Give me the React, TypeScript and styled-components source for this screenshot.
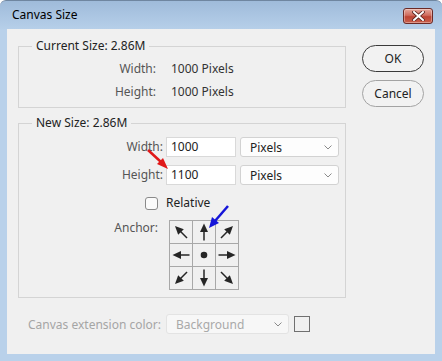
import styled, { createGlobalStyle } from "styled-components";

const GlobalStyle = createGlobalStyle`
  html, body {
    margin: 0;
    padding: 0;
    background: #ffffff;
  }
  body {
    font-family: "Noto Sans", "Open Sans", sans-serif;
  }
`;

const Window = styled.div`
  position: relative;
  width: 442px;
  height: 361px;
  box-sizing: border-box;
  border-top: 1px solid #6f86a0;
  border-radius: 6px 6px 0 0;
  background: linear-gradient(to bottom, #9fbbda 0px, #b6cfe9 28px, #b9d1ea 29px);
  display: flex;
  flex-direction: column;
  overflow: hidden;
`;

const TitleBar = styled.div`
  height: 28px;
  display: flex;
  align-items: center;
  justify-content: space-between;
  padding: 0 9px 0 12px;
`;

const Title = styled.span`
  font-size: 12px;
  color: #000;
  margin-top: -1px;
`;

const CloseButton = styled.div`
  width: 30px;
  height: 16px;
  margin-top: 2px;
  box-sizing: border-box;
  border: 1px solid #6b2a26;
  border-radius: 3px;
  background: linear-gradient(to bottom, #e6a89c 0%, #d06c5e 45%, #be4434 55%, #c9604c 100%);
  display: flex;
  align-items: center;
  justify-content: center;
  box-shadow: inset 0 0 0 1px rgba(255, 255, 255, 0.35);
`;

const Client = styled.div`
  flex: 1;
  margin: 0 7px 7px 7px;
  background: #f0f0f0;
  display: flex;
  padding: 9px 0 0 11px;
  gap: 16px;
  box-sizing: border-box;
`;

const MainColumn = styled.div`
  width: 328px;
  display: flex;
  flex-direction: column;
`;

const Group = styled.fieldset<{ $pad: string; $top?: number }>`
  margin: ${(p) => p.$top ?? 0}px 0 0 0;
  padding: ${(p) => p.$pad};
  border: 1px solid #d4d4d4;
  min-width: 0;
`;

const Legend = styled.legend`
  margin-left: 13px;
  padding: 0 4px;
  font-size: 12px;
  line-height: 16px;
  color: #222;
`;

const InfoGrid = styled.div`
  display: grid;
  grid-template-columns: 137px auto;
  column-gap: 15px;
  row-gap: 7px;
  font-size: 12px;
  line-height: 16px;
`;

const InfoLabel = styled.span`
  text-align: right;
  color: #555;
`;

const InfoValue = styled.span`
  color: #333;
`;

const FieldRow = styled.div<{ $top?: number }>`
  display: flex;
  align-items: center;
  margin-top: ${(p) => p.$top ?? 0}px;
`;

const FieldLabel = styled.span<{ $w: number }>`
  width: ${(p) => p.$w}px;
  text-align: right;
  font-size: 12px;
  line-height: 16px;
  color: #555;
  flex: none;
`;

const TextInput = styled.div`
  width: 70px;
  height: 20px;
  margin-left: 3px;
  box-sizing: border-box;
  border: 1px solid #d9d9d9;
  background: #fff;
  font-size: 12px;
  line-height: 18px;
  padding-left: 4px;
  color: #222;
`;

const Select = styled.div<{ $w: number; $disabled?: boolean }>`
  width: ${(p) => p.$w}px;
  height: 20px;
  box-sizing: border-box;
  border: 1px solid ${(p) => (p.$disabled ? "#e3e3e3" : "#d2d2d2")};
  border-radius: 3px;
  background: ${(p) => (p.$disabled ? "#f7f7f7" : "#fdfdfd")};
  display: flex;
  align-items: center;
  justify-content: space-between;
  padding: 0 6px 0 9px;
  font-size: 12px;
  color: ${(p) => (p.$disabled ? "#a9a9a9" : "#222")};
  margin-left: ${(p) => (p.$disabled ? 0 : 4)}px;
`;

const Checkbox = styled.div`
  width: 13px;
  height: 13px;
  box-sizing: border-box;
  border: 1px solid #8a8a8a;
  border-radius: 3px;
  background: #fbfbfb;
  margin-left: 126px;
  margin-right: 8px;
`;

const CheckLabel = styled.span`
  font-size: 12px;
  line-height: 16px;
  color: #222;
`;

const AnchorRow = styled.div`
  display: flex;
  margin-top: 9px;
  gap: 11px;
`;

const AnchorGrid = styled.div`
  display: grid;
  grid-template-columns: repeat(3, 22px);
  grid-template-rows: repeat(3, 22px);
  gap: 1px;
  padding: 1px;
  background: #a8a8a8;
  width: max-content;
`;

const AnchorCell = styled.div`
  background: #f0f0f0;
  display: flex;
  align-items: center;
  justify-content: center;
`;

const BottomRow = styled.div`
  display: flex;
  align-items: center;
  margin-top: 16px;
  padding-left: 10px;
`;

const DisabledLabel = styled.span`
  font-size: 12px;
  color: #a5a5a5;
  width: 138px;
  flex: none;
`;

const Swatch = styled.div`
  width: 16px;
  height: 16px;
  box-sizing: border-box;
  border: 1px solid #707070;
  margin-left: 5px;
`;

const ButtonColumn = styled.div`
  display: flex;
  flex-direction: column;
  gap: 8px;
  margin-top: 7px;
`;

const PillButton = styled.div<{ $primary?: boolean }>`
  width: 62px;
  height: 27px;
  box-sizing: border-box;
  border: 1px solid ${(p) => (p.$primary ? "#3a3a3a" : "#a3a3a3")};
  border-radius: 14px;
  background: #f2f2f2;
  display: flex;
  align-items: center;
  justify-content: center;
  font-size: 12px;
  color: #222;
`;

const Overlay = styled.svg`
  position: absolute;
  left: 0;
  top: 0;
  pointer-events: none;
`;

function Chevron() {
  return (
    <svg width="8" height="5" viewBox="0 0 8 5">
      <path d="M0.5 0.5 L4 4 L7.5 0.5" fill="none" stroke="#8a8a8a" strokeWidth="1" />
    </svg>
  );
}

function AnchorArrow({ angle }: { angle: number }) {
  return (
    <svg width="22" height="22" viewBox="0 0 22 22" style={{ transform: `rotate(${angle}deg)` }}>
      <polygon points="11,2.5 7,11 15,11" fill="#262626" />
      <line x1="11" y1="9" x2="11" y2="19.5" stroke="#262626" strokeWidth="1.5" />
    </svg>
  );
}

const anchors = [-45, 0, 45, -90, null, 90, -135, 180, 135];

export default function App() {
  return (
    <>
      <GlobalStyle />
      <Window>
        <TitleBar>
          <Title>Canvas Size</Title>
          <CloseButton>
            <svg width="13" height="10" viewBox="0 0 13 10">
              <path d="M2 1 L11 9 M11 1 L2 9" stroke="#5a2420" strokeWidth="3.6" strokeLinecap="square" />
              <path d="M2 1 L11 9 M11 1 L2 9" stroke="#ffffff" strokeWidth="2" strokeLinecap="square" />
            </svg>
          </CloseButton>
        </TitleBar>
        <Client>
          <MainColumn>
            <Group $pad="7px 0 7px 0">
              <Legend>Current Size: 2.86M</Legend>
              <InfoGrid>
                <InfoLabel>Width:</InfoLabel>
                <InfoValue>1000 Pixels</InfoValue>
                <InfoLabel>Height:</InfoLabel>
                <InfoValue>1000 Pixels</InfoValue>
              </InfoGrid>
            </Group>
            <Group $pad="6px 0 7px 0" $top={7}>
              <Legend>New Size: 2.86M</Legend>
              <FieldRow>
                <FieldLabel $w={144}>Width:</FieldLabel>
                <TextInput>1000</TextInput>
                <Select $w={99}>
                  Pixels
                  <Chevron />
                </Select>
              </FieldRow>
              <FieldRow $top={8}>
                <FieldLabel $w={144}>Height:</FieldLabel>
                <TextInput>1100</TextInput>
                <Select $w={99}>
                  Pixels
                  <Chevron />
                </Select>
              </FieldRow>
              <FieldRow $top={10}>
                <Checkbox />
                <CheckLabel>Relative</CheckLabel>
              </FieldRow>
              <AnchorRow>
                <FieldLabel $w={139}>Anchor:</FieldLabel>
                <AnchorGrid>
                  {anchors.map((a, i) => (
                    <AnchorCell key={i}>
                      {a === null ? (
                        <svg width="8" height="8" viewBox="0 0 8 8">
                          <circle cx="4" cy="4" r="3.3" fill="#262626" />
                        </svg>
                      ) : (
                        <AnchorArrow angle={a} />
                      )}
                    </AnchorCell>
                  ))}
                </AnchorGrid>
              </AnchorRow>
            </Group>
            <BottomRow>
              <DisabledLabel>Canvas extension color:</DisabledLabel>
              <Select $w={123} $disabled>
                Background
                <Chevron />
              </Select>
              <Swatch />
            </BottomRow>
          </MainColumn>
          <ButtonColumn>
            <PillButton $primary>OK</PillButton>
            <PillButton>Cancel</PillButton>
          </ButtonColumn>
        </Client>
        <Overlay width="442" height="361" viewBox="0 0 442 361">
          <line x1="148" y1="149" x2="161" y2="161" stroke="#e01818" strokeWidth="2.5" />
          <polygon points="168,168 157,163 163,157" fill="#e01818" />
          <line x1="228" y1="205" x2="215" y2="220" stroke="#1515d8" strokeWidth="2.5" />
          <polygon points="209,227 212,216 219,222" fill="#1515d8" />
        </Overlay>
      </Window>
    </>
  );
}
